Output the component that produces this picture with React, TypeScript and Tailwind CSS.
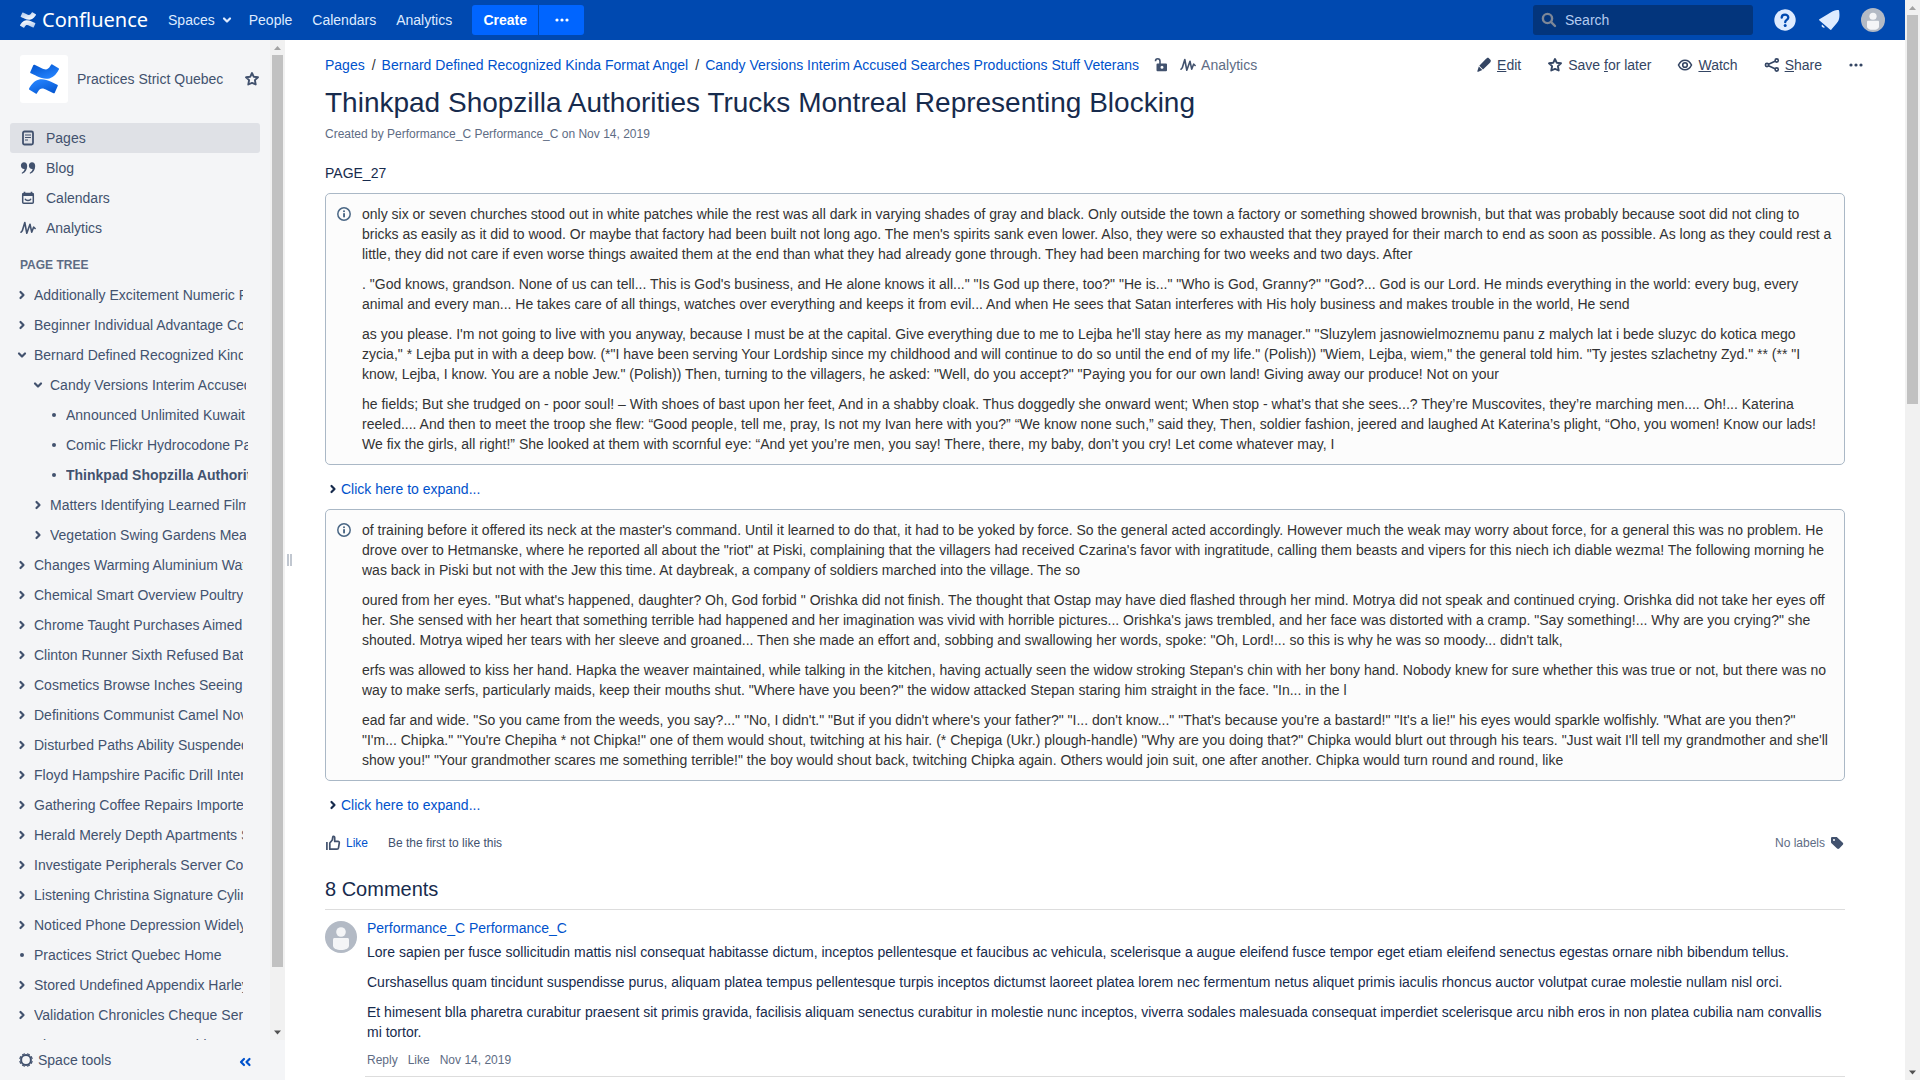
import React from "react";

type IconProps = { className?: string };

function ConfluenceMark({ className, id, from, to }: IconProps & { id: string; from: string; to: string }) {
  return (
    <svg viewBox="0 0 24 24" className={className} aria-hidden="true">
      <defs>
        <linearGradient id={id + "-b"} x1="1" y1="1" x2="0.3" y2="0">
          <stop offset="0" stopColor={from} />
          <stop offset="1" stopColor={to} />
        </linearGradient>
        <linearGradient id={id + "-t"} x1="0" y1="0" x2="0.7" y2="1">
          <stop offset="0" stopColor={from} />
          <stop offset="1" stopColor={to} />
        </linearGradient>
      </defs>
      <path
        fill={`url(#${id}-b)`}
        d="M.87 18.257c-.248.382-.53.875-.763 1.245a.764.764 0 0 0 .255 1.04l4.965 3.054a.764.764 0 0 0 1.058-.26c.199-.332.454-.763.733-1.221 1.967-3.247 3.945-2.853 7.508-1.146l4.957 2.337a.764.764 0 0 0 1.028-.382l2.364-5.346a.764.764 0 0 0-.382-1 599.851 599.851 0 0 1-4.965-2.361C10.911 10.97 5.224 11.185.87 18.257z"
      />
      <path
        fill={`url(#${id}-t)`}
        d="M23.131 5.743c.249-.405.531-.875.764-1.25a.764.764 0 0 0-.256-1.034L18.675.404a.764.764 0 0 0-1.058.26c-.195.335-.451.763-.734 1.225-1.966 3.246-3.945 2.85-7.508 1.146L4.437.694a.764.764 0 0 0-1.027.382L1.046 6.422a.764.764 0 0 0 .382 1c1.039.49 3.105 1.467 4.965 2.361 6.698 3.246 12.392 3.029 16.738-4.04z"
      />
    </svg>
  );
}

const Chevron = ({ className = "" }: IconProps) => (
  <svg viewBox="0 0 16 16" className={"size-4 shrink-0 " + className} fill="none" stroke="currentColor" strokeWidth="2.2" strokeLinecap="round" strokeLinejoin="round" aria-hidden="true">
    <path d="M6.5 5l3 3-3 3" />
  </svg>
);

const Star = () => (
  <svg viewBox="0 0 16 16" className="size-4 shrink-0" fill="none" stroke="currentColor" strokeWidth="1.9" strokeLinejoin="round" aria-hidden="true">
    <path d="M8 2l1.8 3.8 4.2.5-3.1 2.8.8 4.4L8 11.9l-3.7 1.6.8-4.4L2 6.3l4.2-.5z" />
  </svg>
);

const Pulse = () => (
  <svg viewBox="0 0 16 16" className="size-4 shrink-0" fill="none" stroke="currentColor" strokeWidth="1.6" strokeLinecap="round" strokeLinejoin="round" aria-hidden="true">
    <path d="M1 12.2l1.3-1.4L4.8 2.5l2 10.8L10 4.200l1.700 8 1.900-5 1.500 1.300" />
  </svg>
);

const PageIcon = () => (
  <svg viewBox="0 0 16 16" className="size-4 shrink-0" fill="none" stroke="currentColor" aria-hidden="true">
    <rect x="3" y="1.5" width="10" height="13" rx="1.5" strokeWidth="1.8" />
    <path d="M5 5h6M5 7.500h6M5 10h3" strokeWidth="1.2" />
  </svg>
);

const QuoteIcon = () => (
  <svg viewBox="0 0 16 16" className="size-4 shrink-0" fill="currentColor" aria-hidden="true">
    <path d="M4 2.200c2 0 3.200 1.500 3.200 3.800 0 3.600-1.800 6.400-4.600 7.600-.8.3-1.200-.6-.5-1.100 1.400-1 2.300-2.200 2.500-3.600C2.500 9.200.9 7.700.9 5.400c0-1.900 1.300-3.200 3.100-3.200zM12 2.200c2 0 3.200 1.500 3.200 3.800 0 3.600-1.800 6.400-4.600 7.600-.8.3-1.200-.6-.5-1.100 1.400-1 2.300-2.200 2.500-3.600-2.100.3-3.700-1.200-3.700-3.500 0-1.900 1.300-3.200 3.100-3.200z" />
  </svg>
);

const CalendarIcon = () => (
  <svg viewBox="0 0 16 16" className="size-4 shrink-0" fill="none" stroke="currentColor" aria-hidden="true">
    <rect x="2.700" y="3.500" width="10.600" height="9.800" rx="1" strokeWidth="1.500" />
    <path d="M2.500 4.500h11" strokeWidth="3" />
    <path d="M4.500 1.800v2M11.500 1.800v2" strokeWidth="1.600" />
    <path d="M5 8.700c1 2.400 5 2.400 6 0" strokeWidth="1.400" />
  </svg>
);

const Dots = () => (
  <svg viewBox="0 0 16 16" className="size-4 shrink-0" fill="currentColor" aria-hidden="true">
    <circle cx="3" cy="8" r="1.6" />
    <circle cx="8" cy="8" r="1.6" />
    <circle cx="13" cy="8" r="1.6" />
  </svg>
);

const Pencil = () => (
  <svg viewBox="0 0 16 16" className="size-4 shrink-0" fill="currentColor" aria-hidden="true">
    <path d="M9.800 2l1-.8c.6-.5 1.500-.5 2.100.1l1.500 1.500c.6.6.6 1.500.1 2.100l-.8 1L7 12.500 3.300 8.800zM2.800 9.600l3.500 3.500-4 1.700c-.6.200-1.200-.3-.9-.9z" />
  </svg>
);

const Eye = () => (
  <svg viewBox="0 0 16 16" className="size-4 shrink-0" fill="none" stroke="currentColor" strokeWidth="1.6" aria-hidden="true">
    <path d="M1.500 8C3 4.900 5.300 3.200 8 3.200S13 4.900 14.500 8C13 11.100 10.700 12.800 8 12.800S3 11.100 1.500 8z" />
    <circle cx="8" cy="8" r="2.300" />
  </svg>
);

const Share = () => (
  <svg viewBox="0 0 16 16" className="size-4 shrink-0" fill="none" stroke="currentColor" strokeWidth="1.6" aria-hidden="true">
    <path d="M4.500 7.300l6.500-3M4.500 8.800l6.500 3" />
    <circle cx="3" cy="8" r="1.600" />
    <circle cx="12.700" cy="3.500" r="1.600" />
    <circle cx="12.700" cy="12.500" r="1.600" />
  </svg>
);

const Unlock = () => (
  <svg viewBox="0 0 16 16" className="size-4 shrink-0" aria-hidden="true">
    <path d="M2.500 4.200C2.500 2.500 3.600 1.700 4.700 1.700S7 2.500 7 4.200V7" fill="none" stroke="currentColor" strokeWidth="1.600" />
    <path fillRule="evenodd" fill="currentColor" d="M4.500 6.500H13a1 1 0 0 1 1 1v5.800a1 1 0 0 1-1 1H4.500a1 1 0 0 1-1-1V7.500a1 1 0 0 1 1-1zM9 8.800a1.500 1.500 0 1 0 0 3 1.500 1.500 0 0 0 0-3z" />
  </svg>
);

const Info = () => (
  <svg viewBox="0 0 16 16" className="mt-[2px] size-4 shrink-0 text-[#4a6785]" aria-hidden="true">
    <circle cx="8" cy="8" r="6.200" fill="none" stroke="currentColor" strokeWidth="1.500" />
    <circle cx="8" cy="5.200" r="1" fill="currentColor" />
    <rect x="7.100" y="7" width="1.900" height="4.500" rx=".8" fill="currentColor" />
  </svg>
);

const Thumb = () => (
  <svg viewBox="0 0 16 16" className="size-4 shrink-0" fill="none" stroke="currentColor" strokeWidth="1.700" strokeLinejoin="round" aria-hidden="true">
    <path d="M1.900 7v8" />
    <path d="M4.800 14.200V8L7.300 5l.5-3c.2-.9 1.900-.9 1.900.6v3.800H13c.8 0 1.400.7 1.300 1.500l-.8 5c-.1.800-.7 1.300-1.500 1.300z" />
  </svg>
);

const Tag = () => (
  <svg viewBox="0 0 16 16" className="size-4 shrink-0" aria-hidden="true">
    <path fillRule="evenodd" fill="currentColor" d="M2 3.300C2 2.500 2.600 2 3.300 2h3.900c.4 0 .8.100 1.100.4l5.500 5.300c.6.600.6 1.500 0 2.100l-3.600 3.800c-.6.600-1.500.6-2.100 0L2.500 8.300C2.200 8 2 7.600 2 7.200zM5 4a1 1 0 1 0 0 2 1 1 0 0 0 0-2z" />
  </svg>
);

const Gear = () => (
  <svg viewBox="0 0 16 16" className="size-4 shrink-0" fill="none" stroke="currentColor" aria-hidden="true">
    <circle cx="8" cy="8" r="4.900" strokeWidth="2" />
    <path strokeWidth="3" d="M10.200 2.800l.4-1.100M13.200 5.800l1.100-.4M13.200 10.200l1.100.4M10.200 13.200l.4 1.100M5.800 13.200l-.4 1.100M2.800 10.200l-1.100.4M2.800 5.800l-1.100-.4M5.800 2.800l-.4-1.100" />
  </svg>
);

const Avatar = ({ className }: IconProps) => (
  <svg viewBox="0 0 32 32" className={className} aria-hidden="true">
    <circle cx="16" cy="16" r="16" fill="#b3bac5" />
    <circle cx="16" cy="11" r="4.800" fill="#f4f5f7" />
    <path d="M8 18.500c0-.9.600-1.500 1.500-1.500h13c.9 0 1.500.6 1.500 1.500v6c0 3-3.600 4.500-8 4.500s-8-1.500-8-4.500z" fill="#f4f5f7" />
  </svg>
);

const navItems = [
  { label: "Pages", icon: <PageIcon />, active: true },
  { label: "Blog", icon: <QuoteIcon />, active: false },
  { label: "Calendars", icon: <CalendarIcon />, active: false },
  { label: "Analytics", icon: <Pulse />, active: false },
];

type TreeRow = { label: string; level: 0 | 1 | 2; kind: "closed" | "open" | "leaf"; current?: boolean };

const tree: TreeRow[] = [
  { label: "Additionally Excitement Numeric Report", level: 0, kind: "closed" },
  { label: "Beginner Individual Advantage Control", level: 0, kind: "closed" },
  { label: "Bernard Defined Recognized Kinda Format Angel", level: 0, kind: "open" },
  { label: "Candy Versions Interim Accused Searches Productions", level: 1, kind: "open" },
  { label: "Announced Unlimited Kuwait", level: 2, kind: "leaf" },
  { label: "Comic Flickr Hydrocodone Panel", level: 2, kind: "leaf" },
  { label: "Thinkpad Shopzilla Authorities Trucks", level: 2, kind: "leaf", current: true },
  { label: "Matters Identifying Learned Films", level: 1, kind: "closed" },
  { label: "Vegetation Swing Gardens Means", level: 1, kind: "closed" },
  { label: "Changes Warming Aluminium Watch", level: 0, kind: "closed" },
  { label: "Chemical Smart Overview Poultry", level: 0, kind: "closed" },
  { label: "Chrome Taught Purchases Aimed", level: 0, kind: "closed" },
  { label: "Clinton Runner Sixth Refused Battle", level: 0, kind: "closed" },
  { label: "Cosmetics Browse Inches Seeing", level: 0, kind: "closed" },
  { label: "Definitions Communist Camel Novel", level: 0, kind: "closed" },
  { label: "Disturbed Paths Ability Suspended", level: 0, kind: "closed" },
  { label: "Floyd Hampshire Pacific Drill Internal", level: 0, kind: "closed" },
  { label: "Gathering Coffee Repairs Imported", level: 0, kind: "closed" },
  { label: "Herald Merely Depth Apartments Sun", level: 0, kind: "closed" },
  { label: "Investigate Peripherals Server Con", level: 0, kind: "closed" },
  { label: "Listening Christina Signature Cylinder", level: 0, kind: "closed" },
  { label: "Noticed Phone Depression Widely", level: 0, kind: "closed" },
  { label: "Practices Strict Quebec Home", level: 0, kind: "leaf" },
  { label: "Stored Undefined Appendix Harley", level: 0, kind: "closed" },
  { label: "Validation Chronicles Cheque Series", level: 0, kind: "closed" },
  { label: "Vienna Laser Amount Beside", level: 0, kind: "leaf" },
];

const levelClass = ["pl-[14px] pr-[27px]", "pl-[30px] pr-6", "pl-[46px] pr-[22px]"];

const firstPanel = [
  `only six or seven churches stood out in white patches while the rest was all dark in varying shades of gray and black. Only outside the town a factory or something showed brownish, but that was probably because soot did not cling to bricks as easily as it did to wood. Or maybe that factory had been built not long ago. The men's spirits sank even lower. Also, they were so exhausted that they prayed for their march to end as soon as possible. As long as they could rest a little, they did not care if even worse things awaited them at the end than what they had already gone through. They had been marching for two weeks and two days. After`,
  `. "God knows, grandson. None of us can tell... This is God's business, and He alone knows it all..." "Is God up there, too?" "He is..." "Who is God, Granny?" "God?... God is our Lord. He minds everything in the world: every bug, every animal and every man... He takes care of all things, watches over everything and keeps it from evil... And when He sees that Satan interferes with His holy business and makes trouble in the world, He send`,
  `as you please. I'm not going to live with you anyway, because I must be at the capital. Give everything due to me to Lejba he'll stay here as my manager." "Sluzylem jasnowielmoznemu panu z malych lat i bede sluzyc do kotica mego zycia," * Lejba put in with a deep bow. (*"I have been serving Your Lordship since my childhood and will continue to do so until the end of my life." (Polish)) "Wiem, Lejba, wiem," the general told him. "Ty jestes szlachetny Zyd." ** (** "I know, Lejba, I know. You are a noble Jew." (Polish)) Then, turning to the villagers, he asked: "Well, do you accept?" "Paying you for our own land! Giving away our produce! Not on your`,
  `he fields; But she trudged on - poor soul! – With shoes of bast upon her feet, And in a shabby cloak. Thus doggedly she onward went; When stop - what’s that she sees...? They’re Muscovites, they’re marching men.... Oh!... Katerina reeled.... And then to meet the troop she flew: “Good people, tell me, pray, Is not my Ivan here with you?” “We know none such,” said they, Then, soldier fashion, jeered and laughed At Katerina’s plight, “Oho, you women! Know our lads! We fix the girls, all right!” She looked at them with scornful eye: “And yet you’re men, you say! There, there, my baby, don’t you cry! Let come whatever may, I`,
];

const secondPanel = [
  `of training before it offered its neck at the master's command. Until it learned to do that, it had to be yoked by force. So the general acted accordingly. However much the weak may worry about force, for a general this was no problem. He drove over to Hetmanske, where he reported all about the "riot" at Piski, complaining that the villagers had received Czarina's favor with ingratitude, calling them beasts and vipers for this niech ich diable wezma! The following morning he was back in Piski but not with the Jew this time. At daybreak, a company of soldiers marched into the village. The so`,
  `oured from her eyes. "But what's happened, daughter? Oh, God forbid " Orishka did not finish. The thought that Ostap may have died flashed through her mind. Motrya did not speak and continued crying. Orishka did not take her eyes off her. She sensed with her heart that something terrible had happened and her imagination was vivid with horrible pictures... Orishka's jaws trembled, and her face was distorted with a cramp. "Say something!... Why are you crying?" she shouted. Motrya wiped her tears with her sleeve and groaned... Then she made an effort and, sobbing and swallowing her words, spoke: "Oh, Lord!... so this is why he was so moody... didn't talk,`,
  `erfs was allowed to kiss her hand. Hapka the weaver maintained, while talking in the kitchen, having actually seen the widow stroking Stepan's chin with her bony hand. Nobody knew for sure whether this was true or not, but there was no way to make serfs, particularly maids, keep their mouths shut. "Where have you been?" the widow attacked Stepan staring him straight in the face. "In... in the l`,
  `ead far and wide. "So you came from the weeds, you say?..." "No, I didn't." "But if you didn't where's your father?" "I... don't know..." "That's because you're a bastard!" "It's a lie!" his eyes would sparkle wolfishly. "What are you then?" "I'm... Chipka." "You're Chepiha * not Chipka!" one of them would shout, twitching at his hair. (* Chepiga (Ukr.) plough-handle) "Why are you doing that?" Chipka would blurt out through his tears. "Just wait I'll tell my grandmother and she'll show you!" "Your grandmother scares me something terrible!" the boy would shout back, twitching Chipka again. Others would join suit, one after another. Chipka would turn round and round, like`,
];

const comment = [
  "Lore sapien per fusce sollicitudin mattis nisl consequat habitasse dictum, inceptos pellentesque et faucibus ac vehicula, scelerisque a augue eleifend fusce tempor eget etiam eleifend senectus egestas ornare nibh bibendum tellus.",
  "Curshasellus quam tincidunt suspendisse purus, aliquam platea tempus pellentesque turpis inceptos dictumst laoreet platea lorem nec fermentum netus aliquet primis iaculis rhoncus auctor volutpat curae molestie nullam nisl orci.",
  "Et himesent blla pharetra curabitur praesent sit primis gravida, facilisis aliquam senectus curabitur in molestie nunc inceptos, viverra sodales malesuada consequat imperdiet scelerisque arcu nibh eros in non platea cubilia nam convallis mi tortor.",
];

function InfoPanel({ paragraphs }: { paragraphs: string[] }) {
  return (
    <section className="flex gap-[10px] rounded-[5px] border border-[#aab8c6] bg-[#fcfcfc] p-[10px] text-[#333333]">
      <Info />
      <div className="min-w-0 flex-1 space-y-[10px]">
        {paragraphs.map((p) => (
          <p key={p}>{p}</p>
        ))}
      </div>
    </section>
  );
}

function Expander() {
  return (
    <div className="flex pt-[14px] pb-[10px]">
      <button type="button" className="flex items-center">
        <Chevron />
        <span className="text-[#0052cc]">Click here to expand...</span>
      </button>
    </div>
  );
}

function ScrollBar({ thumb }: { thumb: string }) {
  return (
    <div className="flex w-[15px] shrink-0 flex-col items-center bg-[#f1f1f1]" aria-hidden="true">
      <svg viewBox="0 0 15 15" className="size-[15px] shrink-0">
        <path d="M4 10l3.500-4L11 10z" fill="#a3a3a3" />
      </svg>
      <div className="flex min-h-0 w-full flex-1 flex-col px-[2px]">
        <div className={"bg-[#c1c1c1] " + thumb} />
      </div>
      <svg viewBox="0 0 15 15" className="size-[15px] shrink-0">
        <path d="M4 5.500h7l-3.500 4z" fill="#505050" />
      </svg>
    </div>
  );
}

function TopBar() {
  return (
    <header className="flex h-10 shrink-0 items-center bg-[#0049b0] px-5 text-[#deebff]">
      <a href="#home" className="flex items-center gap-[6px] text-white">
        <ConfluenceMark id="brand" from="#a9c4ea" to="#ffffff" className="size-4" />
        <span className="font-['Noto_Sans',sans-serif] text-[20px] leading-10">Confluence</span>
      </a>
      <nav className="ml-5 flex items-center">
        <button type="button" className="flex items-center gap-1">
          Spaces
          <Chevron className="rotate-90" />
        </button>
        <a href="#people" className="ml-[14px]">People</a>
        <a href="#calendars" className="ml-5">Calendars</a>
        <a href="#analytics" className="ml-5">Analytics</a>
      </nav>
      <div className="ml-5 flex gap-px font-bold text-white">
        <button type="button" className="h-[30px] w-[66px] rounded-l-[3px] bg-[#0065ff]">Create</button>
        <button type="button" aria-label="Create from template" className="flex h-[30px] w-[45px] items-center justify-center rounded-r-[3px] bg-[#0065ff]">
          <Dots />
        </button>
      </div>
      <label className="ml-auto flex h-[30px] w-[220px] items-center gap-2 rounded-[3px] bg-[#03357c] px-2">
        <svg viewBox="0 0 16 16" className="size-4 shrink-0 text-[#7d8797]" fill="none" stroke="currentColor" strokeWidth="2.400" strokeLinecap="round" aria-hidden="true">
          <circle cx="6.500" cy="6.500" r="4.600" />
          <path d="M10.200 10.200l3.800 3.800" />
        </svg>
        <input type="text" aria-label="Search" placeholder="Search" className="min-w-0 flex-1 bg-transparent outline-none placeholder:text-[#b3cbf0]" />
      </label>
      <button type="button" aria-label="Help" className="ml-5">
        <svg viewBox="0 0 24 24" className="size-6">
          <circle cx="12" cy="12" r="10.700" fill="#deebff" />
          <path d="M8.700 9.700c0-4.100 6.600-4 6.600-.3 0 2.400-3.100 2.500-3.100 4.800" fill="none" stroke="#0049b0" strokeWidth="2.300" strokeLinecap="round" />
          <circle cx="12.200" cy="17.500" r="1.500" fill="#0049b0" />
        </svg>
      </button>
      <button type="button" aria-label="Notifications" className="ml-5">
        <svg viewBox="0 0 24 24" className="size-6" fill="#deebff">
          <path d="M22.200 3.200c.5 4.400.6 8.300-2.300 11.900l-5.300 6.100c-.3.900-1 .9-1.600.3L2.500 12.600c-.8-.7-.5-1.300.3-1.600l7.500-4.600C13.800 4.400 17.500 1.500 21 2c.8.100 1.100.4 1.200 1.200z" />
          <path d="M5 16.600c-1.200 2 .9 4 3 2.700z" />
        </svg>
      </button>
      <button type="button" aria-label="Your profile" className="ml-5">
        <Avatar className="size-6" />
      </button>
    </header>
  );
}

function SideBar() {
  return (
    <aside className="flex w-[285px] shrink-0 flex-col bg-[#f4f5f7] text-[#42526e]">
      <div className="flex min-h-0 flex-1">
        <div className="min-w-0 flex-1 overflow-hidden">
          <div className="flex items-center pt-[15px] pr-[10px] pb-5 pl-5">
            <a href="#space" aria-label="Space home" className="flex size-12 items-center justify-center rounded-[3px] bg-white">
              <ConfluenceMark id="space" from="#0052cc" to="#2684ff" className="size-[30px]" />
            </a>
            <a href="#space" className="ml-[9px]">Practices Strict Quebec</a>
            <button type="button" aria-label="Favourite space" className="ml-auto">
              <Star />
            </button>
          </div>
          <nav className="px-[10px]">
            {navItems.map((n) => (
              <a
                key={n.label}
                href={"#" + n.label}
                className={"flex h-[30px] items-center gap-[10px] rounded-[3px] px-[10px] " + (n.active ? "bg-[#dfe1e6]" : "")}
              >
                {n.icon}
                {n.label}
              </a>
            ))}
          </nav>
          <h2 className="mt-[12px] px-5 pb-[5px] text-[12px] leading-5 font-bold text-[#5e6c84]">PAGE TREE</h2>
          <ul>
            {tree.map((row) => (
              <li key={row.label} className={"flex h-[30px] items-center gap-1 " + levelClass[row.level]}>
                {row.kind === "leaf" ? (
                  <span className="flex size-4 shrink-0 items-center justify-center">
                    <span className="size-1 rounded-full bg-[#42526e]" />
                  </span>
                ) : (
                  <button type="button" aria-label={"Toggle " + row.label}>
                    <Chevron className={row.kind === "open" ? "rotate-90" : ""} />
                  </button>
                )}
                <a href="#page" className={"min-w-0 flex-1 overflow-hidden whitespace-nowrap " + (row.current ? "font-bold" : "")}>
                  {row.label}
                </a>
              </li>
            ))}
          </ul>
        </div>
        <ScrollBar thumb="h-[94%]" />
      </div>
      <div className="flex h-10 shrink-0 items-center pr-8 pl-[18px]">
        <button type="button" className="flex items-center gap-1">
          <Gear />
          Space tools
        </button>
        <button type="button" aria-label="Collapse sidebar" className="ml-auto text-[#0052cc]">
          <svg viewBox="0 0 16 16" className="mt-1 size-4" fill="none" stroke="currentColor" strokeWidth="2.200" strokeLinecap="round" strokeLinejoin="round">
            <path d="M7 5L4 8l3 3M12.500 5l-3 3 3 3" />
          </svg>
        </button>
      </div>
    </aside>
  );
}

const actionClass = "flex items-center gap-[5px] px-[10px]";

function PageToolbar() {
  return (
    <div className="flex h-[30px] items-center justify-between pr-[31px]">
      <nav className="flex items-center" aria-label="Breadcrumb">
        <ol className="flex items-center text-[#0052cc]">
          <li><a href="#pages">Pages</a></li>
          <li className="pr-[6px] pl-[7px] text-[#333333]">/</li>
          <li><a href="#bernard">Bernard Defined Recognized Kinda Format Angel</a></li>
          <li className="pr-[6px] pl-[7px] text-[#333333]">/</li>
          <li><a href="#candy">Candy Versions Interim Accused Searches Productions Stuff Veterans</a></li>
        </ol>
        <button type="button" aria-label="Unrestricted" className="ml-[14px] text-[#42526e]">
          <Unlock />
        </button>
        <a href="#page-analytics" className="ml-[11px] flex items-center gap-[5px] text-[#42526e]">
          <Pulse />
          <span className="text-[#5e6c84]">Analytics</span>
        </a>
      </nav>
      <div className="flex items-center gap-[6px] text-[#344563]">
        <button type="button" className={actionClass}>
          <Pencil />
          <span><u>E</u>dit</span>
        </button>
        <button type="button" className={actionClass}>
          <Star />
          <span>Save <u>f</u>or later</span>
        </button>
        <button type="button" className={actionClass}>
          <Eye />
          <span><u>W</u>atch</span>
        </button>
        <button type="button" className={actionClass}>
          <Share />
          <span><u>S</u>hare</span>
        </button>
        <button type="button" aria-label="More actions" className={actionClass}>
          <Dots />
        </button>
      </div>
    </div>
  );
}

export default function App() {
  return (
    <div className="flex h-screen overflow-hidden bg-white font-['Liberation_Sans',sans-serif] text-[14px] leading-5 text-[#172b4d]">
      <div className="flex min-w-0 flex-1 flex-col">
        <TopBar />
        <div className="flex min-h-0 flex-1">
          <SideBar />
          <div className="flex w-2 shrink-0 items-center justify-center gap-px" role="separator" aria-orientation="vertical">
            <span className="h-3 w-[2px] bg-[#c1c7d0]" />
            <span className="h-3 w-[2px] bg-[#c1c7d0]" />
          </div>
          <main className="min-w-0 flex-1 overflow-hidden pt-[10px] pl-8">
            <PageToolbar />
            <div className="pr-[60px]">
              <h1 className="mt-[7px] text-[28px] leading-8">Thinkpad Shopzilla Authorities Trucks Montreal Representing Blocking</h1>
              <p className="mt-[5px] text-[12px] text-[#5e6c84]">Created by Performance_C Performance_C on Nov 14, 2019</p>
              <p className="mt-[19px] mb-[10px]">PAGE_27</p>
              <InfoPanel paragraphs={firstPanel} />
              <Expander />
              <InfoPanel paragraphs={secondPanel} />
              <Expander />
              <div className="mt-2 flex h-5 items-center text-[12px] text-[#42526e]">
                <button type="button" className="flex items-center gap-[5px]">
                  <Thumb />
                  <span className="text-[#0052cc]">Like</span>
                </button>
                <span className="ml-5">Be the first to like this</span>
                <span className="ml-auto text-[#5e6c84]">No labels</span>
                <button type="button" aria-label="Edit labels" className="ml-1">
                  <Tag />
                </button>
              </div>
              <h2 className="mt-6 border-b border-[#dddddd] pb-2 text-[20px] leading-6">8 Comments</h2>
              <article className="flex gap-[8px] pt-[11px]">
                <Avatar className="size-8 shrink-0" />
                <div className="min-w-0 flex-1 border-b border-[#dddddd] pb-[6px] pl-[2px]">
                  <a href="#author" className="-mt-[3px] block text-[#0052cc]">Performance_C Performance_C</a>
                  <div className="mt-1 space-y-[10px] pr-3">
                    {comment.map((c) => (
                      <p key={c}>{c}</p>
                    ))}
                  </div>
                  <div className="mt-[8px] flex gap-[10px] text-[12px] text-[#5e6c84]">
                    <a href="#reply">Reply</a>
                    <button type="button">Like</button>
                    <span>Nov 14, 2019</span>
                  </div>
                </div>
              </article>
            </div>
          </main>
        </div>
      </div>
      <ScrollBar thumb="h-[37%]" />
    </div>
  );
}
